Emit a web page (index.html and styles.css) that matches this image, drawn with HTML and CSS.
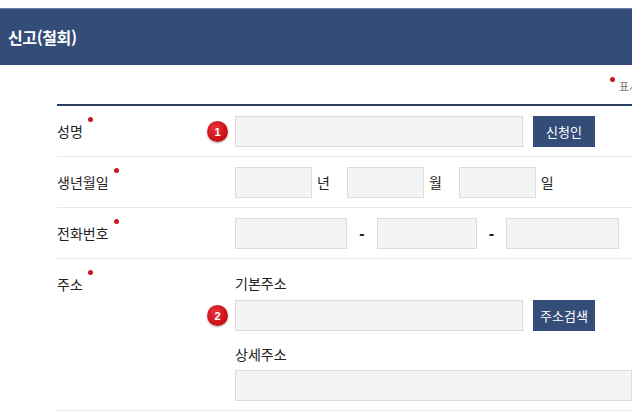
FILE: index.html
```html
<!DOCTYPE html>
<html lang="ko">
<head>
<meta charset="utf-8">
<title>신고(철회)</title>
<link rel="stylesheet" href="styles.css">
</head>
<body>
<div class="page">
  <header class="title-bar"><h1>신고(철회)</h1></header>
  <p class="notice"><span class="notice-dot"></span><span class="notice-text">표시는 필수 입력 항목입니다.</span></p>
  <div class="form">
    <div class="row">
      <div class="label">성명<span class="req"></span></div>
      <div class="field">
        <div class="line">
          <span class="badge">1</span>
          <input class="input w-name" type="text">
          <button class="btn" type="button">신청인</button>
        </div>
      </div>
    </div>
    <div class="row">
      <div class="label">생년월일<span class="req"></span></div>
      <div class="field">
        <div class="line">
          <input class="input w-date" type="text"><span class="unit">년</span>
          <input class="input w-date" type="text"><span class="unit">월</span>
          <input class="input w-date" type="text"><span class="unit">일</span>
        </div>
      </div>
    </div>
    <div class="row">
      <div class="label">전화번호<span class="req"></span></div>
      <div class="field">
        <div class="line">
          <input class="input w-tel1" type="text"><span class="dash">-</span>
          <input class="input w-tel2" type="text"><span class="dash dash-b">-</span>
          <input class="input w-tel3" type="text">
        </div>
      </div>
    </div>
    <div class="row">
      <div class="label">주소<span class="req"></span></div>
      <div class="field">
        <div class="sub">기본주소</div>
        <div class="line addr-line">
          <span class="badge">2</span>
          <input class="input w-name" type="text">
          <button class="btn" type="button">주소검색</button>
        </div>
        <div class="sub sub-2">상세주소</div>
        <div class="line addr-line-2">
          <input class="input w-full" type="text">
        </div>
      </div>
    </div>
  </div>
</div>
</body>
</html>
```
FILE: styles.css
```css
* {
  box-sizing: border-box;
}

html, body {
  margin: 0;
  overflow: hidden;
}

body {
  font-family: "Noto Sans CJK KR", "Noto Sans", sans-serif;
  color: #222;
  background: #fff;
}

.page {
  padding-top: 8px;
}

.title-bar {
  height: 57px;
  background: #344c78;
  border-top: 1px solid #6d7f9f;
  display: flex;
  align-items: center;
  padding-left: 8px;
}

.title-bar h1 {
  margin: 0;
  font-size: 16px;
  font-weight: 700;
  color: #fff;
  letter-spacing: -0.4px;
  line-height: 1;
}

.notice {
  margin: 0;
  height: 39px;
  padding-left: 610px;
  display: flex;
  align-items: center;
  white-space: nowrap;
  font-size: 11px;
  color: #777;
  padding-top: 3px;
  overflow: hidden;
}

.notice-dot {
  width: 5px;
  height: 5px;
  border-radius: 50%;
  background: #c8161d;
  margin-right: 4px;
  margin-bottom: 14px;
  flex: none;
}

.form {
  margin-left: 57px;
  border-top: 2px solid #2a3d63;
}

.row {
  display: flex;
  padding: 10px 0 9px;
  border-bottom: 1px solid #e8e8e8;
}

.label {
  width: 178px;
  flex: none;
  font-size: 14px;
  line-height: 31px;
  height: 31px;
  color: #222;
  white-space: nowrap;
}

.req {
  display: inline-block;
  width: 5px;
  height: 5px;
  border-radius: 50%;
  background: #c8161d;
  margin-left: 5px;
  vertical-align: 15px;
}

.field {
  flex: 1;
  min-width: 0;
}

.line {
  display: flex;
  align-items: center;
  position: relative;
}

.badge {
  position: absolute;
  left: -28px;
  top: 5px;
  width: 21px;
  height: 21px;
  border-radius: 50%;
  background: radial-gradient(circle at 40% 35%, #e8333a 0%, #cf1119 60%, #b50d14 100%);
  box-shadow: 0 1px 2px rgba(0, 0, 0, 0.35);
  color: #fff;
  font-family: "Liberation Sans", Arial, sans-serif;
  font-size: 11px;
  font-weight: 700;
  display: flex;
  align-items: center;
  justify-content: center;
}

.input {
  height: 31px;
  background: #f4f4f4;
  border: 1px solid #dcdcdc;
  padding: 0 6px;
  font: inherit;
  font-size: 13px;
  outline: none;
  flex: none;
  margin: 0;
}

.w-name {
  width: 288px;
}

.w-date {
  width: 77px;
}

.unit {
  font-size: 14px;
  line-height: 31px;
  margin: 0 17px 0 5px;
  color: #222;
}

.w-tel1 {
  width: 112px;
}

.w-tel2 {
  width: 100px;
}

.w-tel3 {
  width: 113px;
}

.dash {
  width: 30px;
  text-align: center;
  font-family: "Liberation Sans", Arial, sans-serif;
  font-size: 16px;
  font-weight: 700;
  line-height: 31px;
  color: #222;
}

.dash-b {
  width: 29px;
}

.w-full {
  width: 100%;
}

.btn {
  margin-left: 10px;
  width: 62px;
  height: 31px;
  border: none;
  background: #344c78;
  color: #fff;
  font-family: inherit;
  font-size: 13px;
  padding: 0;
  cursor: pointer;
  flex: none;
}

.sub {
  font-size: 14px;
  line-height: 28px;
  color: #222;
}

.addr-line {
  margin-top: 3px;
}

.sub-2 {
  margin-top: 9px;
}

.addr-line-2 {
  margin-top: 2px;
}
```
